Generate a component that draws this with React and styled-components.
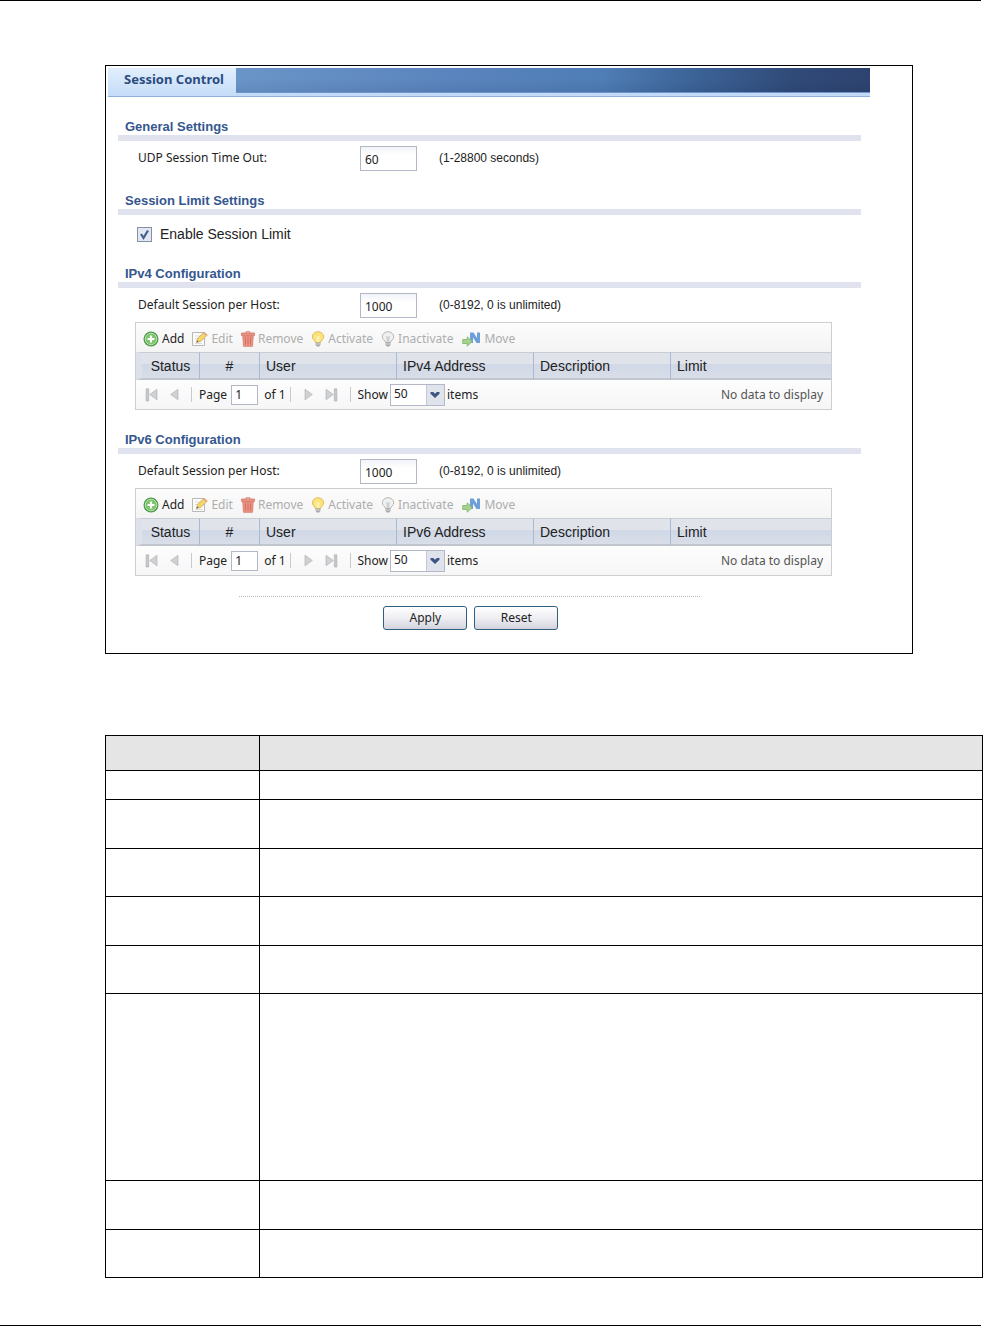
import React from 'react';
import styled, { createGlobalStyle } from 'styled-components';

const GlobalStyle = createGlobalStyle`
  * {
    box-sizing: border-box;
  }

  body {
    margin: 0;
    background: #fff;
    color: #222;
    font-family: 'Noto Sans', 'Open Sans', sans-serif;
    font-size: 12px;
    line-height: 16px;
  }

  button,
  input,
  select {
    margin: 0;
    font: inherit;
    color: inherit;
  }
`;

const arial = "'Liberation Sans', Arial, sans-serif";

const Page = styled.div`
  min-height: 100vh;
  display: flex;
  flex-direction: column;
`;

const PageRule = styled.hr`
  flex: none;
  height: 1px;
  margin: ${props => (props.$bottom ? 'auto 2px 0 0' : '0 2px 0 0')};
  border: 0;
  background: #000;
`;

const Frame = styled.main`
  margin: 64px 70px 0 105px;
  padding: 2px 42px 23px 2px;
  border: 1px solid #000;
`;

const TabBar = styled.nav`
  display: flex;
  height: 29px;
  border-bottom: 1px solid #8fb0da;
  background:
    linear-gradient(#6f95cb 0 1px, #c3dbf8 1px) bottom / 100% 4px no-repeat,
    linear-gradient(rgba(0, 0, 0, 0) 40%, rgba(0, 20, 60, 0.1)),
    linear-gradient(90deg, #6a95c8 17%, #5a84bd 45%, #4f7db5 65%, #3d6599 76%, #304a78 90%, #2e4370);
`;

const Tab = styled.a`
  width: 128px;
  padding: 3px 0 0 16px;
  background: linear-gradient(#e2effd, #c5dcf8);
  color: #2a4c80;
  font-size: 13px;
  font-weight: bold;
  text-decoration: none;
`;

const Content = styled.form`
  padding: 0 9px 0 10px;
`;

const Section = styled.section`
  padding-top: 22px;
`;

const Title = styled.h2`
  margin: 0;
  padding-left: 7px;
  border-bottom: 6px solid #e0e3ed;
  color: #35568f;
  font: bold 13px/16px ${arial};
`;

const Field = styled.div`
  display: flex;
  align-items: center;
  height: 25px;
  margin-top: 5px;
  padding-left: 20px;
`;

const Label = styled.label`
  width: 222px;
  padding-bottom: 2px;
`;

const TextBox = styled.input`
  width: 57px;
  height: 25px;
  padding: 2px 4px 0;
  border: 1px solid #b3b8c8;
  background: linear-gradient(#f1f3f8, #fff 8px);
`;

const Hint = styled.span`
  margin-left: 22px;
  padding-bottom: 2px;
  font-family: ${arial};
`;

const CheckRow = styled.label`
  display: flex;
  align-items: center;
  gap: 8px;
  height: 29px;
  padding: 9px 0 0 19px;
  font: 14px/20px ${arial};
`;

const CheckBox = styled.input`
  appearance: none;
  width: 15px;
  height: 15px;
  border: 1px solid #8590a8;
  background: #e8ebf3;

  &:checked {
    background: #e3e7f1
      url("data:image/svg+xml,%3Csvg xmlns='http://www.w3.org/2000/svg' viewBox='0 0 13 13'%3E%3Cpath d='M3 6l2.5 4L10 2.5' fill='none' stroke='%23455d91' stroke-width='2.2'/%3E%3C/svg%3E");
  }
`;

const Grid = styled.div`
  margin: 4px 29px 0 17px;
  border: 1px solid #ccced2;
`;

const Toolbar = styled.div`
  display: flex;
  align-items: center;
  gap: 8px;
  height: 29px;
  padding: 3px 0 0 7px;
  background: linear-gradient(#fcfcfc, #f4f4f4);
`;

const Tool = styled.button`
  display: flex;
  align-items: center;
  gap: 3px;
  padding: 0;
  border: 0;
  background: none;

  &:disabled {
    color: #adadad;
  }
`;

const Table = styled.table`
  width: 100%;
  table-layout: fixed;
  border-collapse: separate;
  border-spacing: 0;
`;

const Th = styled.th`
  width: ${props => props.$width};
  height: 28px;
  padding: ${props => (props.$center ? '0' : '0 0 0 6px')};
  border-top: 1px solid #c8ccd4;
  border-bottom: 2px solid #c0c5ce;
  border-left: ${props => (props.$first ? '6px solid #dce1ea' : '1px solid #a9b9d1')};
  background: linear-gradient(#e0e3e9 45%, #d0d8e6 45%, #d9dee8);
  font: 14px/16px ${arial};
  text-align: ${props => (props.$center ? 'center' : 'left')};
`;

const Pager = styled.div`
  display: flex;
  align-items: center;
  height: 29px;
  padding: 0 8px 0 9px;
  background: linear-gradient(#fdfdfd, #f6f6f6);
`;

const PageButton = styled.button`
  display: flex;
  margin-right: 12px;
  padding: 0;
  border: 0;
  background: none;
`;

const Divider = styled.span`
  width: 1px;
  height: 15px;
  margin-left: ${props => props.$before || '0'};
  margin-right: ${props => props.$after};
  background: #c6cad2;
`;

const PageNumber = styled.input`
  width: 27px;
  height: 20px;
  margin: 0 6px 0 4px;
  padding: 0 3px;
  border: 1px solid #b3b8c8;
`;

const SelectWrap = styled.span`
  position: relative;
  margin: 0 2px;

  svg {
    position: absolute;
    top: 1px;
    right: 1px;
    pointer-events: none;
  }
`;

const Select = styled.select`
  display: block;
  appearance: none;
  width: 55px;
  height: 22px;
  padding: 0 3px 2px;
  border: 1px solid #b3b8c8;
  border-radius: 0;
  background: #fff;
`;

const Empty = styled.span`
  margin-left: auto;
  color: #555;
`;

const Actions = styled.div`
  display: flex;
  justify-content: center;
  gap: 7px;
  width: 62%;
  margin: 20px auto 0 121px;
  padding: 9px 0 0 3px;
  border-top: 1px dotted #b9b9b9;
`;

const Action = styled.button`
  width: 84px;
  height: 24px;
  padding: 0;
  border: 1px solid #2f5f80;
  border-radius: 3px;
  background: linear-gradient(#fff, #eeeef3 50%, #d3d3de);
`;

const Reference = styled.table`
  width: calc(100% - 105px);
  margin: 81px 0 47px 105px;
  table-layout: fixed;
  border-collapse: collapse;

  th,
  td {
    padding: 0;
    border: 1px solid #000;
  }

  th {
    background: #e5e5e5;
  }
`;

const ReferenceRow = styled.tr`
  height: ${props => props.$height};
`;

const AddIcon = () => (
  <svg width="16" height="16" viewBox="0 0 16 16">
    <circle cx="8" cy="8" r="7.5" fill="#4c9b45" />
    <circle cx="8" cy="8" r="5.8" fill="#7cc46c" stroke="#d3ebcd" strokeWidth="0.8" />
    <path d="M8 4.5v7M4.5 8h7" stroke="#fff" strokeWidth="2.2" />
  </svg>
);

const EditIcon = () => (
  <svg width="16" height="16" viewBox="0 0 16 16">
    <path d="M.5 1.5h12v13H.5z" fill="#fcfcfa" stroke="#b8b8b8" />
    <path d="M3 5h6M3 7.5h4M3 12.5h7" stroke="#dcdcdc" />
    <path d="M4.5 11.5l1-4L12 1.2 15.3 4 8.7 10.4z" fill="#f5d66b" stroke="#c9ab62" strokeWidth="0.8" />
    <path d="M11 2.2l1-1L15.3 4l-1.1 1.1z" fill="#e5a38c" />
    <path d="M4.5 11.5l.6-2.2 1.6 1.5z" fill="#666" />
  </svg>
);

const RemoveIcon = () => (
  <svg width="14" height="16" viewBox="0 0 14 16">
    <path d="M5 2V.8h4V2" fill="none" stroke="#d28175" />
    <path d="M.5 2h13v2.5H.5z" fill="#ea9284" stroke="#d77969" strokeWidth="0.8" />
    <path d="M1.8 5h10.4l-.7 10.3h-9z" fill="#ec9384" stroke="#d77969" strokeWidth="0.8" />
    <path d="M4.5 6.5v7M7 6.5v7M9.5 6.5v7" stroke="#cf6f61" />
  </svg>
);

const BulbIcon = ({ off }) => (
  <svg width="14" height="16" viewBox="0 0 14 16">
    <path
      d="M7 .7a5.7 5.3 0 0 0-5.7 5.2c0 2.6 2.8 3.4 3.2 5.6h5c.4-2.2 3.2-3 3.2-5.6A5.7 5.3 0 0 0 7 .7z"
      fill={off ? '#f0f0f0' : '#fbe27a'}
      stroke={off ? '#b6b6b6' : '#e2be58'}
    />
    <path d="M5 5.5l1.2 1.2L7 5.5l.8 1.2L9 5.5M6.2 7v4M7.8 7v4" fill="none" stroke={off ? '#b8b8b8' : '#fffbe0'} strokeWidth="0.8" />
    <path d="M4.5 11.5h5v2.3L8.3 15.5H5.7l-1.2-1.7z" fill="#a9a9a9" />
    <path d="M4.5 13h5" stroke="#e5e5e5" strokeWidth="0.8" />
  </svg>
);

const MoveIcon = () => (
  <svg width="20" height="16" viewBox="0 0 20 16">
    <path d="M9 1.5h3.5l3.5 5.5V1.5h3V12h-3.5L12 6.5V12H9z" fill="#6d9fd8" />
    <path d="M1.7 8.5h4.5V5.8l5 4.7-5 4.7v-2.7H1.7z" fill="#a8d18d" stroke="#7fb26a" strokeWidth="0.8" />
  </svg>
);

const ArrowIcon = ({ back, edge }) => (
  <svg width={edge ? 13 : 9} height="14" viewBox={edge ? '0 0 13 14' : '0 0 9 14'}>
    <g transform={back ? `translate(${edge ? 13 : 9}) scale(-1 1)` : undefined}>
      <path d="M1 1.2v10.6L8.3 6.5z" fill="#d0d1d3" stroke="#a9abaf" strokeWidth="0.6" />
      {edge && <path d="M9.3 .8h2.6v12.2H9.3z" fill="#c5c7ca" stroke="#a9abaf" strokeWidth="0.6" />}
    </g>
  </svg>
);

const DropIcon = () => (
  <svg width="18" height="20" viewBox="0 0 18 20">
    <path d="M0 0h18v20H0z" fill="#dfe3ec" />
    <path d="M.5 0v20" stroke="#c3c9d6" />
    <path d="M4.5 7h2.7L9 8.8 10.8 7h2.7v1.7L9 13 4.5 8.7z" fill="#3c5582" />
  </svg>
);

const tools = [
  { name: 'Add', icon: <AddIcon /> },
  { name: 'Edit', icon: <EditIcon />, disabled: true },
  { name: 'Remove', icon: <RemoveIcon />, disabled: true },
  { name: 'Activate', icon: <BulbIcon />, disabled: true },
  { name: 'Inactivate', icon: <BulbIcon off />, disabled: true },
  { name: 'Move', icon: <MoveIcon />, disabled: true },
];

const rowHeights = ['29px', '49px', '48px', '49px', '48px', '187px', '49px', '48px'];

const Configuration = ({ version }) => (
  <Section>
    <Title>{version} Configuration</Title>
    <Field>
      <Label htmlFor={`${version}-host`}>Default Session per Host:</Label>
      <TextBox id={`${version}-host`} type="text" defaultValue="1000" />
      <Hint>(0-8192, 0 is unlimited)</Hint>
    </Field>
    <Grid>
      <Toolbar>
        {tools.map(tool => (
          <Tool key={tool.name} type="button" disabled={tool.disabled}>
            {tool.icon}
            {tool.name}
          </Tool>
        ))}
      </Toolbar>
      <Table>
        <thead>
          <tr>
            <Th $width="63px" $center $first>Status</Th>
            <Th $width="60px" $center>#</Th>
            <Th $width="137px">User</Th>
            <Th $width="137px">{version} Address</Th>
            <Th $width="137px">Description</Th>
            <Th>Limit</Th>
          </tr>
        </thead>
      </Table>
      <Pager>
        <PageButton type="button" aria-label="First page"><ArrowIcon back edge /></PageButton>
        <PageButton type="button" aria-label="Previous page"><ArrowIcon back /></PageButton>
        <Divider $after="7px" />
        <label htmlFor={`${version}-page`}>Page</label>
        <PageNumber id={`${version}-page`} type="text" defaultValue="1" />
        <span>of 1</span>
        <Divider $before="4px" $after="13px" />
        <PageButton type="button" aria-label="Next page"><ArrowIcon /></PageButton>
        <PageButton type="button" aria-label="Last page"><ArrowIcon edge /></PageButton>
        <Divider $after="7px" />
        <label htmlFor={`${version}-show`}>Show</label>
        <SelectWrap>
          <Select id={`${version}-show`} defaultValue="50">
            <option value="50">50</option>
          </Select>
          <DropIcon />
        </SelectWrap>
        <span>items</span>
        <Empty>No data to display</Empty>
      </Pager>
    </Grid>
  </Section>
);

const App = () => {
  return (
    <Page>
      <GlobalStyle />
      <PageRule />
      <Frame>
        <TabBar>
          <Tab href="#session-control">Session Control</Tab>
        </TabBar>
        <Content>
          <Section>
            <Title>General Settings</Title>
            <Field>
              <Label htmlFor="udp-timeout">UDP Session Time Out:</Label>
              <TextBox id="udp-timeout" type="text" defaultValue="60" />
              <Hint>(1-28800 seconds)</Hint>
            </Field>
          </Section>
          <Section>
            <Title>Session Limit Settings</Title>
            <CheckRow>
              <CheckBox type="checkbox" defaultChecked />
              Enable Session Limit
            </CheckRow>
          </Section>
          <Configuration version="IPv4" />
          <Configuration version="IPv6" />
          <Actions>
            <Action type="button">Apply</Action>
            <Action type="reset">Reset</Action>
          </Actions>
        </Content>
      </Frame>
      <Reference>
        <colgroup>
          <col width="154" />
          <col />
        </colgroup>
        <thead>
          <ReferenceRow $height="35px">
            <th />
            <th />
          </ReferenceRow>
        </thead>
        <tbody>
          {rowHeights.map((height, i) => (
            <ReferenceRow key={i} $height={height}>
              <td />
              <td />
            </ReferenceRow>
          ))}
        </tbody>
      </Reference>
      <PageRule $bottom />
    </Page>
  );
};

export default App;
